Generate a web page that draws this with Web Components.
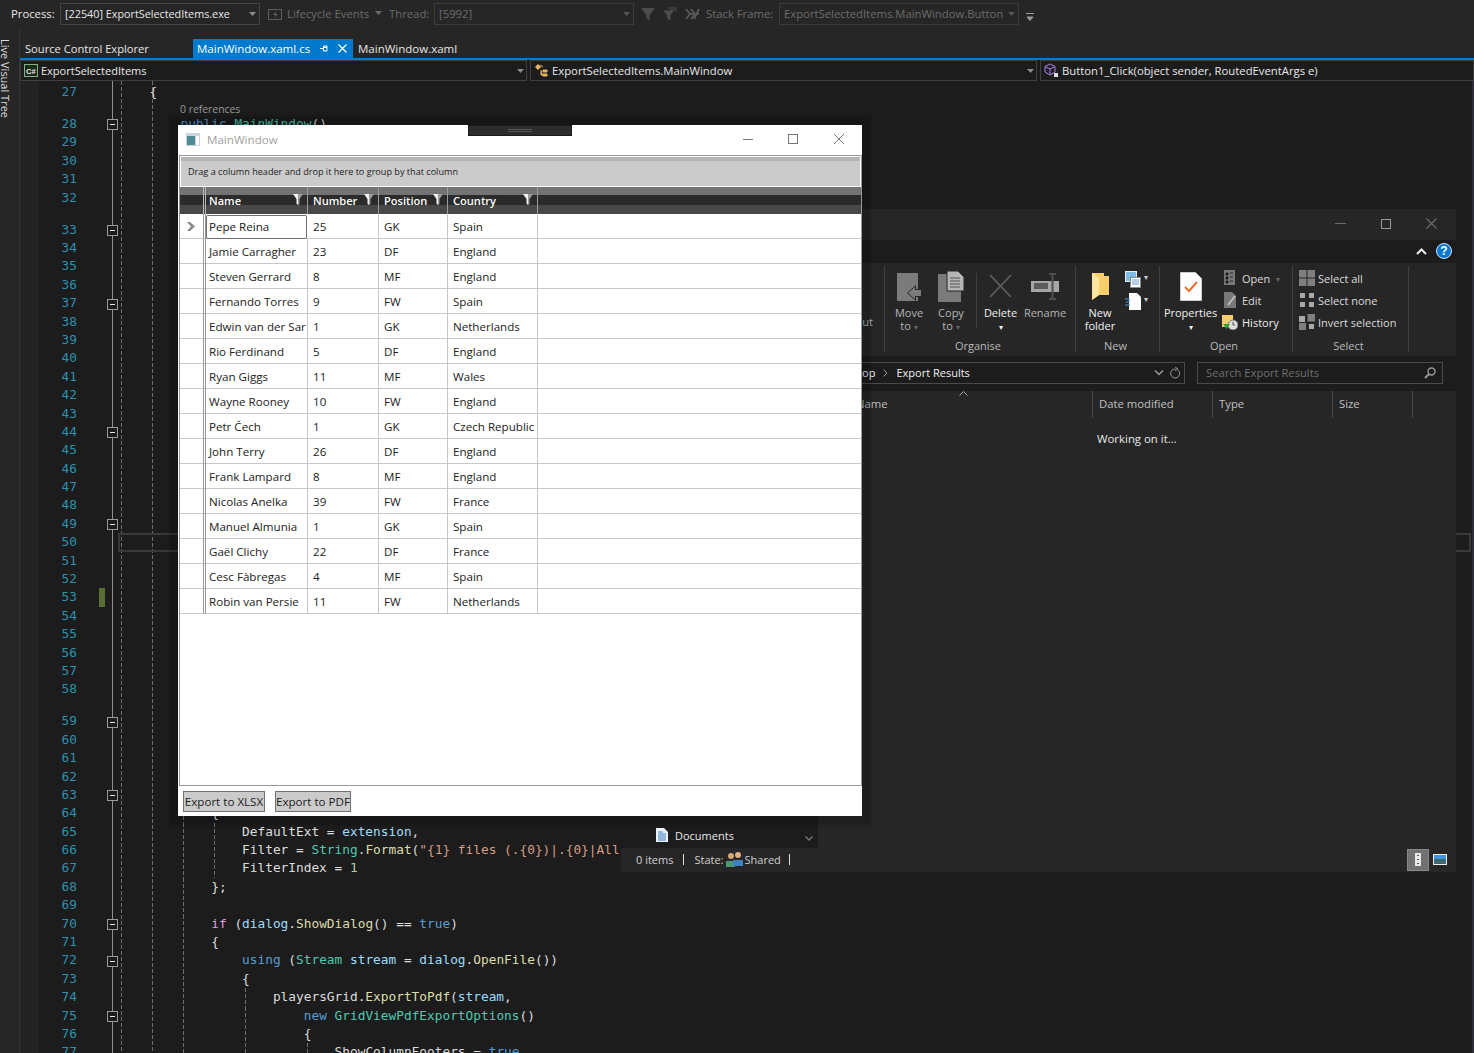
<!DOCTYPE html>
<html>
<head>
<meta charset="utf-8">
<title>MainWindow</title>
<style>
  html, body { margin: 0; height: 100%; background: #1c1c1c; overflow: hidden; }
  body { font-family: "Open Sans", "Liberation Sans", sans-serif; }
</style>
</head>
<body>
<ide-shell>
  <explorer-window></explorer-window>
  <wpf-window></wpf-window>
</ide-shell>

<script>
const UI = `"Open Sans", "Liberation Sans", sans-serif`;
const MONO = `"DejaVu Sans Mono", "Liberation Mono", monospace`;

const chevron = (c = "#8a8a8a") => `<svg width="7" height="4" viewBox="0 0 7 4"><path d="M0 0h7L3.5 4z" fill="${c}"/></svg>`;

class VsToolbar extends HTMLElement {
  constructor() {
    super();
    this.attachShadow({ mode: "open" });
    this.shadowRoot.innerHTML = `
      <style>
        :host { display: flex; align-items: center; height: 28px; background: #262626; color: #e6e6e6; font: 11.3px ${UI}; white-space: nowrap; padding-left: 11px; box-sizing: border-box; }
        .combo { display: flex; align-items: center; justify-content: space-between; height: 22px; box-sizing: border-box; border: 1px solid #434346; padding: 0 3px 0 4px; }
        .off { color: #6c6c6c; }
        .combo.off { border-color: #3c3c3c; }
        span { padding-bottom: 2px; }
        svg { display: block; flex: none; }
      </style>
      <span style="width:49px">Process:</span>
      <div class="combo" style="width:200px"><span style="font-size:10.8px">[22540] ExportSelectedItems.exe</span>${chevron()}</div>
      <svg style="margin:0 5px 0 8px" width="14" height="14" viewBox="0 0 14 14"><rect x=".5" y="2.5" width="13" height="10" fill="none" stroke="#5d5d5d"/><path d="M8 4L5 8h2.5L6 11l4-4H7.5z" fill="#5d5d5d"/></svg>
      <span class="off" style="width:83px">Lifecycle Events</span>
      <span style="margin:0 7px 0 5px">${chevron("#6c6c6c")}</span>
      <span class="off" style="width:45px">Thread:</span>
      <div class="combo off" style="width:200px"><span>[5992]</span>${chevron("#555")}</div>
      <svg style="margin-left:7px" width="14" height="15" viewBox="0 0 14 15"><path d="M0 1h14L8.5 8v6L5.5 11V8z" fill="#4e4e4e"/></svg>
      <svg style="margin-left:8px" width="14" height="14" viewBox="0 0 14 14"><path d="M1 4h9L7 8v5L4.500 11V8zM5 1h9M7 3h7" fill="#4e4e4e" stroke="#4e4e4e"/></svg>
      <svg style="margin-left:8px" width="15" height="12" viewBox="0 0 15 12"><path d="M1 1l4 5-4 5M6 1l4 5-4 5M14 1L9 11M5 6h9" fill="none" stroke="#565656" stroke-width="2"/></svg>
      <span class="off" style="margin-left:6px;width:73px">Stack Frame:</span>
      <div class="combo off" style="width:240px"><span>ExportSelectedItems.MainWindow.Button</span>${chevron("#555")}</div>
      <svg style="margin:6px 0 0 7px" width="8" height="8" viewBox="0 0 8 8"><path d="M0 .5h8M1 4h6L4 7.500z" stroke="#9a9a9a" fill="#9a9a9a"/></svg>`;
  }
}
customElements.define("vs-toolbar", VsToolbar);

class DocTabs extends HTMLElement {
  constructor() {
    super();
    this.attachShadow({ mode: "open" });
    this.shadowRoot.innerHTML = `
      <style>
        :host { display: flex; align-items: stretch; height: 32px; box-sizing: border-box; padding-top: 11px; border-bottom: 2px solid #007acc; background: #262626; color: #e6e6e6; font: 11.5px/19px ${UI}; white-space: nowrap; }
        .first { width: 173px; padding-left: 5px; box-sizing: border-box; font-size: 11.15px; }
        .active { display: flex; align-items: center; width: 160px; padding-left: 4px; box-sizing: border-box; background: #007acc; color: #fff; }
        .active svg:first-of-type { margin-left: 10px; }
        .active svg:last-of-type { margin-left: 9px; }
        .last { padding-left: 5px; }
      </style>
      <div class="first">Source Control Explorer</div>
      <div class="active"><span>MainWindow.xaml.cs</span>
        <svg width="9" height="9" viewBox="0 0 9 9"><path d="M0 4.500h3M3.500 2v5h3.500V2zM3.500 3.500h3.500" fill="none" stroke="#fff"/></svg>
        <svg width="9" height="9" viewBox="0 0 9 9"><path d="M.5.5l8 8M8.500.5l-8 8" stroke="#fff" stroke-width="1.200"/></svg>
      </div>
      <div class="last">MainWindow.xaml</div>`;
  }
}
customElements.define("doc-tabs", DocTabs);

class NavBar extends HTMLElement {
  constructor() {
    super();
    this.attachShadow({ mode: "open" });
    this.shadowRoot.innerHTML = `
      <style>
        :host { display: grid; grid-template-columns: 507px 507px 1fr; gap: 3px; height: 21px; background: #1c1c1c; color: #e8e8e8; font: 11.3px ${UI}; white-space: nowrap; }
        .c { display: flex; align-items: center; gap: 3px; border: 1px solid #3f3f41; padding: 0 2px 0 3px; box-sizing: border-box; }
        .c > span { flex: 1; }
        svg { display: block; flex: none; }
      </style>
      <div class="c">
        <svg width="14" height="13" viewBox="0 0 14 13"><rect x=".5" y=".5" width="13" height="12" fill="#1c2a1c" stroke="#7fb27f"/><text x="2" y="9.500" font-size="7.500" font-family="Liberation Sans" font-weight="700" fill="#e8e8e8">C#</text></svg>
        <span style="font-size:11px">ExportSelectedItems</span>${chevron()}
      </div>
      <div class="c">
        <svg width="15" height="15" viewBox="0 0 15 15"><path d="M1 4l3-3 3 3-3 3z" fill="#e8b35c"/><path d="M6 2l3 2M9 7h4v2H9zM9 11h4v2H9zM7 7v5h2" fill="#e8b35c" stroke="#e8b35c"/></svg>
        <span>ExportSelectedItems.MainWindow</span>${chevron()}
      </div>
      <div class="c">
        <svg width="15" height="15" viewBox="0 0 15 15"><path d="M6 1l5 2.500V9L6 12 1 9V3.500zM1 3.500L6 6l5-2.500M6 6v6" fill="none" stroke="#a97fe0"/><rect x="10" y="10" width="4" height="4" fill="#ddd"/></svg>
        <span>Button1_Click(object sender, RoutedEventArgs e)</span>
      </div>`;
  }
}
customElements.define("nav-bar", NavBar);

// line number -> [indent level, code html]
const kw = s => `<i style="color:#569cd6">${s}</i>`;
const ty = s => `<i style="color:#4ec9b0">${s}</i>`;
const vr = s => `<i style="color:#9cdcfe">${s}</i>`;
const fn = s => `<i style="color:#dcdcaa">${s}</i>`;
const st = s => `<i style="color:#d69d85">${s}</i>`;
const CODE = {
  27: [0, "{"],
  28: [1, `${kw("public")} ${ty("MainWindow")}()`],
  64: [2, "{"],
  65: [3, `DefaultExt = ${vr("extension")},`],
  66: [3, `Filter = ${ty("String")}.${fn("Format")}(${st('"{1} files (.{0})|.{0}|All')}`],
  67: [3, `FilterIndex = <i style="color:#b5cea8">1</i>`],
  68: [2, "};"],
  70: [2, `<i style="color:#d8a0df">if</i> (${vr("dialog")}.${fn("ShowDialog")}() == ${kw("true")})`],
  71: [2, "{"],
  72: [3, `${kw("using")} (${ty("Stream")} ${vr("stream")} = ${vr("dialog")}.${fn("OpenFile")}())`],
  73: [3, "{"],
  74: [4, `playersGrid.${fn("ExportToPdf")}(${vr("stream")},`],
  75: [5, `${kw("new")} ${ty("GridViewPdfExportOptions")}()`],
  76: [5, "{"],
  77: [6, `ShowColumnFooters = ${kw("true")}`]
};
const FOLDS = [28, 33, 37, 44, 49, 59, 63, 70, 72, 75];
const LENS = [28, 33, 59];
const guideFor = n => {
  let xs = [];
  if (n >= 64) xs.push(183);
  if (n >= 65 && n <= 67) xs.push(214);
  if (n >= 74 && n <= 77) xs.push(245);
  if (n === 77) xs.push(307);
  return xs;
};

class CodeEditor extends HTMLElement {
  constructor() {
    super();
    this.attachShadow({ mode: "open" });
    let rows = "";
    const dash = "repeating-linear-gradient(to bottom,#6e6e6e 0 4px,transparent 4px 6px)";
    for (let n = 27; n <= 77; n++) {
      const c = CODE[n];
      const bg = guideFor(n).map(x => `${dash} ${x - 118}px 0/1px 100% no-repeat`).join(",");
      rows += `<div class="row${LENS.includes(n) ? " lens" : ""}${n === 50 ? " cur" : ""}">
        <span class="num">${n}</span>
        <span class="chg${n === 53 ? " on" : ""}"></span>
        <span class="fold">${FOLDS.includes(n) ? '<b class="box"></b>' : ""}</span>
        <div class="code" style="${bg ? `background:${bg};` : ""}">
          ${n === 28 ? '<em>0 references</em>' : ""}
          ${c ? `<pre style="padding-left:${31.6 + c[0] * 30.83}px">${c[1]}</pre>` : ""}
        </div>
      </div>`;
    }
    this.shadowRoot.innerHTML = `
      <style>
        :host { display: block; flex: 1; min-height: 0; overflow: hidden; background:
          linear-gradient(#2e2e3c,#2e2e3c) right 0/2px 100% no-repeat,
          ${dash} 101px 0/1px 100% no-repeat,
          ${dash} 132px 0/1px 100% no-repeat,
          linear-gradient(#8f8f8f,#8f8f8f) 92px 0/1px 100% no-repeat,
          linear-gradient(#232323,#232323) 0 0/19px 100% no-repeat,
          #1c1c1c; color: #dcdcdc; padding: 2px 3px 0 0; box-sizing: border-box; }
        .row { display: flex; height: 18.4px; align-items: stretch; }
        .row.lens { height: 32px; }
        .num { width: 57px; text-align: right; color: #2b91af; font: 12.8px/18.36px ${MONO}; align-self: flex-end; }
        .chg { width: 6px; margin-left: 22px; }
        .chg.on { background: #586f32; }
        .fold { width: 12px; margin-left: 1px; display: flex; align-items: flex-end; padding-bottom: 3px; box-sizing: border-box; }
        .box { display: block; width: 9px; height: 9px; margin-left: 1px; border: 1px solid #9a9a9a; background: linear-gradient(#e8e8e8,#e8e8e8) center/5px 1px no-repeat, #1c1c1c; }
        .code { flex: 1; min-width: 0; display: flex; flex-direction: column; justify-content: flex-end; }
        .cur .code { box-shadow: inset 0 0 0 2px #393939; }
        pre { margin: 0; font: 12.8px/18.36px ${MONO}; white-space: pre; }
        i { font-style: normal; }
        em { font: 10.4px/13.6px ${UI}; color: #9a9a9a; padding-left: 62px; margin-bottom: -2px; }
      </style>
      ${rows}`;
  }
}
customElements.define("code-editor", CodeEditor);

class IdeShell extends HTMLElement {
  constructor() {
    super();
    this.attachShadow({ mode: "open" });
    this.shadowRoot.innerHTML = `
      <style>
        :host { display: grid; grid-template-columns: 20px 1fr; grid-template-rows: 28px 1fr; position: relative; width: 1474px; height: 1053px; overflow: hidden; background: #1c1c1c; }
        vs-toolbar { grid-column: 1 / 3; }
        .side { background: #262626; color: #dcdcdc; font: 11px ${UI}; writing-mode: vertical-rl; padding: 11px 8px 0 0; white-space: nowrap; box-sizing: border-box; line-height: 11px; border-right: 1px solid #333; }
        .main { display: flex; flex-direction: column; min-width: 0; min-height: 0; }
      </style>
      <vs-toolbar></vs-toolbar>
      <div class="side">Live Visual Tree</div>
      <div class="main">
        <doc-tabs></doc-tabs>
        <nav-bar></nav-bar>
        <code-editor></code-editor>
      </div>
      <slot></slot>`;
  }
}
customElements.define("ide-shell", IdeShell);

class RibbonGroup extends HTMLElement {
  constructor() {
    super();
    this.attachShadow({ mode: "open" });
    this.shadowRoot.innerHTML = `
      <style>
        :host { display: flex; flex-direction: column; box-sizing: border-box; border-right: 1px solid #3f3f3f; margin: 3px 0 4px; height: 86px; }
        .body { flex: 1; display: flex; min-height: 0; }
        .label { height: 13px; line-height: 13px; padding-right: 4px; text-align: center; color: #b9b9b9; font-size: 11px; }
      </style>
      <div class="body"><slot></slot></div>
      <div class="label">${this.getAttribute("label") || ""}</div>`;
  }
}
customElements.define("ribbon-group", RibbonGroup);

class ExplorerWindow extends HTMLElement {
  constructor() {
    super();
    this.attachShadow({ mode: "open" });
    const big = (w, icon, l1, l2, cls = "") => `<div class="big ${cls}" style="width:${w}px"><div class="ic">${icon}</div><span>${l1}</span><span>${l2}</span></div>`;
    const small = (icon, t) => `<div class="small"><span class="si">${icon}</span>${t}</div>`;
    const sq = (x, y, s, f = "#7f7f7f") => `<rect x="${x}" y="${y}" width="${s}" height="${s}" fill="${f}"/>`;
    this.shadowRoot.innerHTML = `
      <style>
        :host { position: absolute; left: 621px; top: 209px; width: 835px; height: 663px; display: flex; flex-direction: column; background: #262626; color: #dcdcdc; font: 11px ${UI}; white-space: nowrap; overflow: hidden; }
        svg { display: block; flex: none; }
        .title { height: 31px; display: flex; justify-content: flex-end; align-items: center; gap: 35px; padding: 0 19px 2px 0; box-sizing: border-box; }
        .tabs { height: 23px; background: #1c1c1c; display: flex; justify-content: flex-end; align-items: center; gap: 9px; padding: 0 4px 1px 0; box-sizing: border-box; }
        .help { width: 16px; height: 16px; border-radius: 50%; background: #0a78d2; border: 1px solid #cfe4f7; box-sizing: border-box; color: #fff; font: 700 12px/14px "Liberation Sans", sans-serif; text-align: center; }
        .ribbon { height: 93px; display: flex; flex: none; }
        .big { display: flex; flex-direction: column; align-items: center; line-height: 13px; color: #b5b5b5; }
        .big.on { color: #f0f0f0; }
        .ic { height: 40px; flex: none; box-sizing: border-box; display: flex; align-items: center; }
        .sep { width: 1px; background: #3f3f3f; height: 55px; margin-top: 7px; }
        .col { display: flex; flex-direction: column; padding-top: 1px; }
        .small { display: flex; align-items: center; height: 22px; gap: var(--g, 5px); }
        .si { width: 16px; display: flex; justify-content: center; }
        .addr { height: 35px; flex: none; background: #1c1c1c; display: flex; align-items: center; color: #f0f0f0; font-size: 11px; padding-bottom: 2px; box-sizing: border-box; }
        .path { width: 564px; height: 22px; box-sizing: border-box; border: 1px solid #4a4a4a; display: flex; align-items: center; justify-content: flex-end; padding-right: 3px; }
        .search { margin-left: 12px; width: 246px; height: 22px; box-sizing: border-box; border: 1px solid #4a4a4a; color: #6f6f6f; display: flex; align-items: center; justify-content: space-between; padding: 0 6px 0 8px; font-size: 11.2px; }
        .body { flex: 1; display: flex; min-height: 0; }
        .nav { width: 197px; background: #1c1c1c; display: flex; flex-direction: column; justify-content: flex-end; }
        .doc { height: 35px; display: flex; align-items: center; gap: 7px; padding: 9px 0 0 35px; box-sizing: border-box; color: #e8e8e8; position: relative; }
        .list { flex: 1; display: flex; flex-direction: column; }
        .cols { display: flex; height: 27px; color: #c0c0c0; font-size: 11.3px; }
        .cols div { border-right: 1px solid #4a4a4a; box-sizing: border-box; padding-left: 6px; line-height: 25px; }
        .work { flex: 1; color: #e8e8e8; padding: 13px 0 0 279px; font-size: 11.4px; }
        .status { height: 24px; flex: none; display: flex; align-items: center; background: #262626; padding: 0 0 1px 15px; color: #d0d0d0; box-sizing: border-box; }
        .status b { width: 1px; height: 11px; background: #e0e0e0; margin: 0 10px; }
        .views { margin-left: auto; margin-right: 9px; display: flex; align-items: center; gap: 4px; }
        .views div { width: 22px; height: 22px; background: #717171; border: 1px solid #888; box-sizing: border-box; display: flex; align-items: center; justify-content: center; }
      </style>
      <div class="title">
        <svg width="11" height="11" viewBox="0 0 11 11"><path d="M0 5.500h11" stroke="#6a6a6a"/></svg>
        <svg width="10" height="10" viewBox="0 0 10 10"><rect x=".5" y=".5" width="9" height="9" fill="none" stroke="#9a9a9a"/></svg>
        <svg width="11" height="11" viewBox="0 0 11 11"><path d="M.5.5l10 10M10.500.5l-10 10" stroke="#6e6e6e" stroke-width="1.100"/></svg>
      </div>
      <div class="tabs">
        <svg width="11" height="7" viewBox="0 0 11 7"><path d="M1 6l4.500-4.500L10 6" fill="none" stroke="#eee" stroke-width="2"/></svg>
        <div class="help">?</div>
      </div>
      <div class="ribbon">
        <ribbon-group label="Clipboard" style="width:264px"><div style="margin-left:auto;margin-top:48px;color:#b5b5b5;padding-right:11px">Paste shortcut</div></ribbon-group>
        <ribbon-group label="Organise" style="width:191px">
          <div style="display:flex;padding-left:3px">
            ${big(42, `<svg width="27" height="29" viewBox="0 0 27 29"><path d="M1 1h21v28H1z" fill="#7b7b7b"/><path d="M11 21l9-8v4h6v8h-6v4z" fill="#262626"/><path d="M12 21l7-6v3h6v6h-6v3z" fill="#7b7b7b"/></svg>`, "Move", `to <span style="color:#666;font-size:8px">▾</span>`)}
            ${big(42, `<svg width="27" height="31" viewBox="0 0 27 31"><path d="M0 3h23v28H0z" fill="#7b7b7b"/><path d="M9 0h11l6 6v14H9z" fill="#b5b5b5" stroke="#262626"/><path d="M12 7h10M12 10h10M12 13h10M12 16h10" stroke="#555"/></svg>`, "Copy", `to <span style="color:#666;font-size:8px">▾</span>`)}
            <div class="sep" style="margin-left:4px"></div>
            ${big(47, `<svg width="23" height="22" viewBox="0 0 23 22"><path d="M1 0l21 22M22 0L1 22" stroke="#5c5c5c" stroke-width="1.800"/></svg>`, "Delete", `<span style="font-size:8px">▾</span>`, "on")}
            ${big(42, `<svg width="29" height="27" viewBox="0 0 29 27"><rect x="0" y="8" width="28" height="11" fill="#a6a6a6"/><rect x="3" y="10" width="14" height="6" fill="#5c5c5c"/><path d="M18 1h7M21.500 1v25M18 26h7" stroke="#4f4f4f" stroke-width="2" fill="none"/></svg>`, "Rename", "")}
          </div>
        </ribbon-group>
        <ribbon-group label="New" style="width:84px">
          <div style="display:flex;padding-left:2px">
            ${big(44, `<svg width="19" height="29" viewBox="0 0 19 29"><path d="M1 1h12v3h5v19H8l-7 5z" fill="#f6cf6c"/><path d="M1 1l7 5v17l-7 5z" fill="#ffe6a0"/></svg>`, "New", "folder", "on")}
            <div style="padding:5px 0 0 3px">
              <div style="display:flex;gap:2px"><svg width="17" height="18" viewBox="0 0 17 18"><rect x=".5" y=".5" width="11" height="10" fill="#7ebbe8" stroke="#eee"/><rect x="5.500" y="6.500" width="10" height="10" fill="#fff" stroke="#888"/><path d="M7 9h7M7 11h7M7 13h7" stroke="#6aa0d0"/></svg><span style="font-size:8px;color:#ccc">▾</span></div>
              <div style="display:flex;gap:2px;margin-top:4px"><svg width="17" height="17" viewBox="0 0 17 17"><path d="M4 0h8l4 4v13H4z" fill="#fff"/><path d="M0 6h5M1 9h4M0 12h5" stroke="#4f9ce0"/></svg><span style="font-size:8px;color:#ccc">▾</span></div>
            </div>
          </div>
        </ribbon-group>
        <ribbon-group label="Open" style="width:133px">
          <div style="display:flex;padding-left:4px">
            ${big(53, `<svg width="22" height="29" viewBox="0 0 22 29"><path d="M.5.5h15l6 6v22H.500z" fill="#fff" stroke="#ccc"/><path d="M5 15l4 4 8-9" fill="none" stroke="#e8702a" stroke-width="2"/></svg>`, "Properties", `<span style="font-size:8px">▾</span>`, "on")}
            <div class="col" style="padding-left:5px;--g:4px">
              ${small(`<svg width="12" height="16" viewBox="0 0 12 16"><rect width="11" height="15" fill="#787878"/><path d="M2 3h2v2H2zM6 3h3M2 7h2v2H2zM6 7h3M2 11h2v2H2zM6 11h3" stroke="#262626"/></svg>`, `Open <span style="color:#666;font-size:8px;margin-left:2px">▾</span>`)}
              ${small(`<svg width="13" height="16" viewBox="0 0 13 16"><path d="M0 0h8l4 4v12H0z" fill="#787878"/><path d="M4 13l7-9" stroke="#bdbdbd" stroke-width="2"/></svg>`, "Edit")}
              ${small(`<svg width="16" height="15" viewBox="0 0 16 15"><rect width="11" height="12" fill="#f6cf6c"/><circle cx="11" cy="10" r="5" fill="#ddd" stroke="#777"/><path d="M11 7v3h2" fill="none" stroke="#555"/><path d="M1 9l3.500 5L8 9z" fill="#2fa33a"/></svg>`, `<span style="color:#eee">History</span>`)}
            </div>
          </div>
        </ribbon-group>
        <ribbon-group label="Select" style="width:116px">
          <div class="col" style="padding-left:6px;--g:3px">
            ${small(`<svg width="16" height="16" viewBox="0 0 16 16">${sq(0, 0, 7.500)}${sq(8.500, 0, 7.500)}${sq(0, 8.500, 7.500)}${sq(8.500, 8.500, 7.500)}</svg>`, "Select all")}
            ${small(`<svg width="14" height="14" viewBox="0 0 14 14">${sq(0, 0, 5, "#a8a8a8")}${sq(9, 0, 5, "#a8a8a8")}${sq(0, 9, 5, "#a8a8a8")}${sq(9, 9, 5, "#a8a8a8")}</svg>`, "Select none")}
            ${small(`<svg width="16" height="16" viewBox="0 0 16 16">${sq(0, 2, 6, "#a8a8a8")}${sq(8.500, 0, 7.500)}${sq(0, 9, 7)}${sq(10, 10, 5, "#a8a8a8")}</svg>`, "Invert selection")}
          </div>
        </ribbon-group>
      </div>
      <div class="addr">
        <div class="path">
          <span style="padding-left:211px">Desktop</span>
          <span style="margin:0 8px"><svg width="5" height="8" viewBox="0 0 5 8"><path d="M.5.500L4 4 .5 7.500" fill="none" stroke="#999"/></svg></span>
          <span style="margin-right:auto">Export Results</span>
          <svg width="10" height="6" viewBox="0 0 10 6"><path d="M1 .500l4 4 4-4" fill="none" stroke="#999" stroke-width="1.500"/></svg>
          <svg style="margin-left:6px" width="11" height="12" viewBox="0 0 11 12"><path d="M8.500 3.500A4.500 4.500 0 1 1 5.500 2M5 0l3 2-3 2" fill="none" stroke="#999"/></svg>
        </div>
        <div class="search"><span>Search Export Results</span><svg width="12" height="12" viewBox="0 0 12 12"><circle cx="7.500" cy="4.500" r="3.500" fill="none" stroke="#9a9a9a" stroke-width="1.400"/><path d="M5 7l-4 4" stroke="#9a9a9a" stroke-width="2"/></svg></div>
      </div>
      <div class="body">
        <div class="nav"><div class="doc"><svg width="12" height="14" viewBox="0 0 12 14"><path d="M0 0h8l4 4v10H0z" fill="#eaf3fb"/><path d="M2 4h5M2 6h8M2 8h8M2 10h8M2 12h8" stroke="#3a7bbf"/></svg>Documents<svg style="position:absolute;right:5px;bottom:7px" width="8" height="5" viewBox="0 0 8 5"><path d="M.5.500L4 4l3.500-3.500" fill="none" stroke="#777" stroke-width="1.400"/></svg></div></div>
        <div class="list">
          <div class="cols">
            <div style="width:275px;padding-left:38px;position:relative">Name<svg style="position:absolute;left:141px;top:0" width="9" height="5" viewBox="0 0 9 5"><path d="M.5 4.500L4.500.500l4 4" fill="none" stroke="#aaa"/></svg></div>
            <div style="width:120px">Date modified</div><div style="width:120px">Type</div><div style="width:80px">Size</div>
          </div>
          <div class="work">Working on it...</div>
        </div>
      </div>
      <div class="status">0 items<b></b>State:<svg style="margin:0 2px" width="17" height="15" viewBox="0 0 17 15"><circle cx="5" cy="4" r="3" fill="#d9a679"/><path d="M0 15V9h9v6z" fill="#4d9a72"/><circle cx="12" cy="3" r="3" fill="#e0b080"/><path d="M7 14V8h10v6z" fill="#3f7fc0"/></svg>Shared<b style="margin-left:8px"></b>
        <div class="views">
          <div><svg width="6" height="13" viewBox="0 0 6 13"><rect width="6" height="13" fill="#e8e8e8"/><path d="M2 2h2v1H2zM2 6h2v1H2zM2 10h2v1H2z" fill="#555"/></svg></div>
          <svg width="14" height="11" viewBox="0 0 14 11"><rect width="14" height="11" fill="#eee"/><rect x="1" y="1" width="12" height="4" fill="#3d94e0"/><rect x="1" y="5" width="12" height="5" fill="#3d6a70"/></svg>
        </div>
      </div>`;
  }
}
customElements.define("explorer-window", ExplorerWindow);

const PLAYERS = [
  ["Pepe Reina", 25, "GK", "Spain"], ["Jamie Carragher", 23, "DF", "England"],
  ["Steven Gerrard", 8, "MF", "England"], ["Fernando Torres", 9, "FW", "Spain"],
  ["Edwin van der Sar", 1, "GK", "Netherlands"], ["Rio Ferdinand", 5, "DF", "England"],
  ["Ryan Giggs", 11, "MF", "Wales"], ["Wayne Rooney", 10, "FW", "England"],
  ["Petr Čech", 1, "GK", "Czech Republic"], ["John Terry", 26, "DF", "England"],
  ["Frank Lampard", 8, "MF", "England"], ["Nicolas Anelka", 39, "FW", "France"],
  ["Manuel Almunia", 1, "GK", "Spain"], ["Gaël Clichy", 22, "DF", "France"],
  ["Cesc Fàbregas", 4, "MF", "Spain"], ["Robin van Persie", 11, "FW", "Netherlands"]
];

class PlayersGrid extends HTMLElement {
  constructor() {
    super();
    this.attachShadow({ mode: "open" });
    const funnel = `<svg width="10" height="11" viewBox="0 0 10 11"><path d="M0 0h5v11L3.500 9.500V5z" fill="#f4f4f4"/><path d="M10 0H5v11l1.500-1V5z" fill="#9c9c9c"/></svg>`;
    const th = ["Name", "Number", "Position", "Country"].map(h => `<div class="th"><span>${h}</span>${funnel}</div>`).join("");
    const rows = PLAYERS.map((p, i) => `
      <div class="tr">
        <div class="ind">${i === 0 ? '<svg width="8" height="9" viewBox="0 0 8 9"><path d="M0 0h3l5 4.500L3 9H0l4-4.500z" fill="#8a8a8a"/></svg>' : ""}</div>
        ${p.map((v, j) => `<div class="td${i === 0 && j === 0 ? " focus" : ""}">${v}</div>`).join("")}
        <div></div>
      </div>`).join("");
    this.shadowRoot.innerHTML = `
      <style>
        :host { display: flex; flex-direction: column; flex: 1; min-height: 0; background: #fff; color: #222; font: 11.6px ${UI}; white-space: nowrap; border: 1px solid #9a9a9a; }
        .group { height: 30px; margin: 1px 1px 0; border-bottom: 1px solid #fff; background: linear-gradient(#b4b4b4 0 4px, #cbcbcb 4px); line-height: 29px; padding-left: 7px; font-size: 9.1px; color: #222; box-sizing: border-box; }
        .tr, .thead { display: grid; grid-template-columns: 26px 102px 71px 69px 90px 1fr; }
        .thead { height: 27px; background: linear-gradient(#737373 0 8px, #2b2b2b 8px 18px, #484848 18px); color: #fff; font-weight: 600; font-size: 11.1px; }
        .thead > div { border-right: 1px solid #9a9a9a; box-sizing: border-box; }
        .thead > div:first-child { border-right: 3px double #bdbdbd; }
        .thead > div:last-child { border-right: 0; }
        .th { display: flex; justify-content: space-between; padding: 7px 4px 0 5px; line-height: 14px; }
        .th:nth-child(2) { padding-left: 3px; }
        .tr { height: 25px; box-sizing: border-box; border-bottom: 1px solid #c8c8c8; line-height: 25px; }
        .ind { border-right: 3px double #999; box-sizing: border-box; display: flex; align-items: center; justify-content: center; padding-right: 2px; }
        .td { border-right: 1px solid #c8c8c8; padding-left: 5px; box-sizing: border-box; }
        .td:nth-child(2) { padding-left: 3px; }
        .focus { box-shadow: inset 0 0 0 1px #6e6e6e; border-radius: 2px; margin: 1px 1px 0 0; line-height: 23px; border-right: 0; }
      </style>
      <div class="group">Drag a column header and drop it here to group by that column</div>
      <div class="thead"><div></div>${th}<div></div></div>
      <div style="flex:1">${rows}</div>`;
  }
}
customElements.define("players-grid", PlayersGrid);

class WpfWindow extends HTMLElement {
  constructor() {
    super();
    this.attachShadow({ mode: "open" });
    this.shadowRoot.innerHTML = `
      <style>
        :host { position: absolute; left: 178px; top: 125px; width: 684px; height: 691px; background: #fff; display: flex; flex-direction: column; font: 11.6px ${UI}; box-sizing: border-box; padding: 0 0 0 1px; box-shadow: 0 0 3px 9px rgba(0,0,0,.2); }
        .bar { height: 30px; flex: none; display: flex; align-items: center; color: #a0a0a0; font-size: 11.6px; padding: 0 0 2px 7px; box-sizing: border-box; }
        .bar svg { display: block; flex: none; }
        .grip { position: absolute; left: 290px; top: 0; width: 104px; height: 11px; background: #2d2d2d; border: 1px solid #1a1a1a; box-sizing: border-box; display: flex; align-items: center; justify-content: center; }
        .grip i { width: 24px; height: 3px; border-top: 1px solid #555; border-bottom: 1px solid #555; box-sizing: border-box; }
        .foot { height: 30px; flex: none; display: flex; gap: 10px; align-items: center; padding-left: 4px; }
        button { font: 11.6px ${UI}; height: 21px; padding: 0; background: #cbcbcb; border: 1px solid #707070; color: #1c1c1c; }
      </style>
      <div class="grip"><i></i></div>
      <div class="bar">
        <svg width="14" height="13" viewBox="0 0 14 13"><rect width="14" height="13" fill="#cdd5dc"/><rect x="1" y="3" width="8" height="9" fill="#4f8a96"/><rect x="10" y="3" width="3" height="9" fill="#fff"/></svg>
        <span style="margin-left:7px">MainWindow</span>
        <svg style="margin-left:465px" width="10" height="10" viewBox="0 0 10 10"><path d="M0 5.500h10" stroke="#777"/></svg>
        <svg style="margin-left:35px" width="10" height="10" viewBox="0 0 10 10"><rect x=".5" y=".5" width="9" height="9" fill="none" stroke="#777"/></svg>
        <svg style="margin-left:36px" width="10" height="10" viewBox="0 0 10 10"><path d="M0 0l10 10M10 0L0 10" stroke="#777"/></svg>
      </div>
      <players-grid></players-grid>
      <div class="foot"><button style="width:82px">Export to XLSX</button><button style="width:76px">Export to PDF</button></div>`;
  }
}
customElements.define("wpf-window", WpfWindow);
</script>
</body>
</html>
